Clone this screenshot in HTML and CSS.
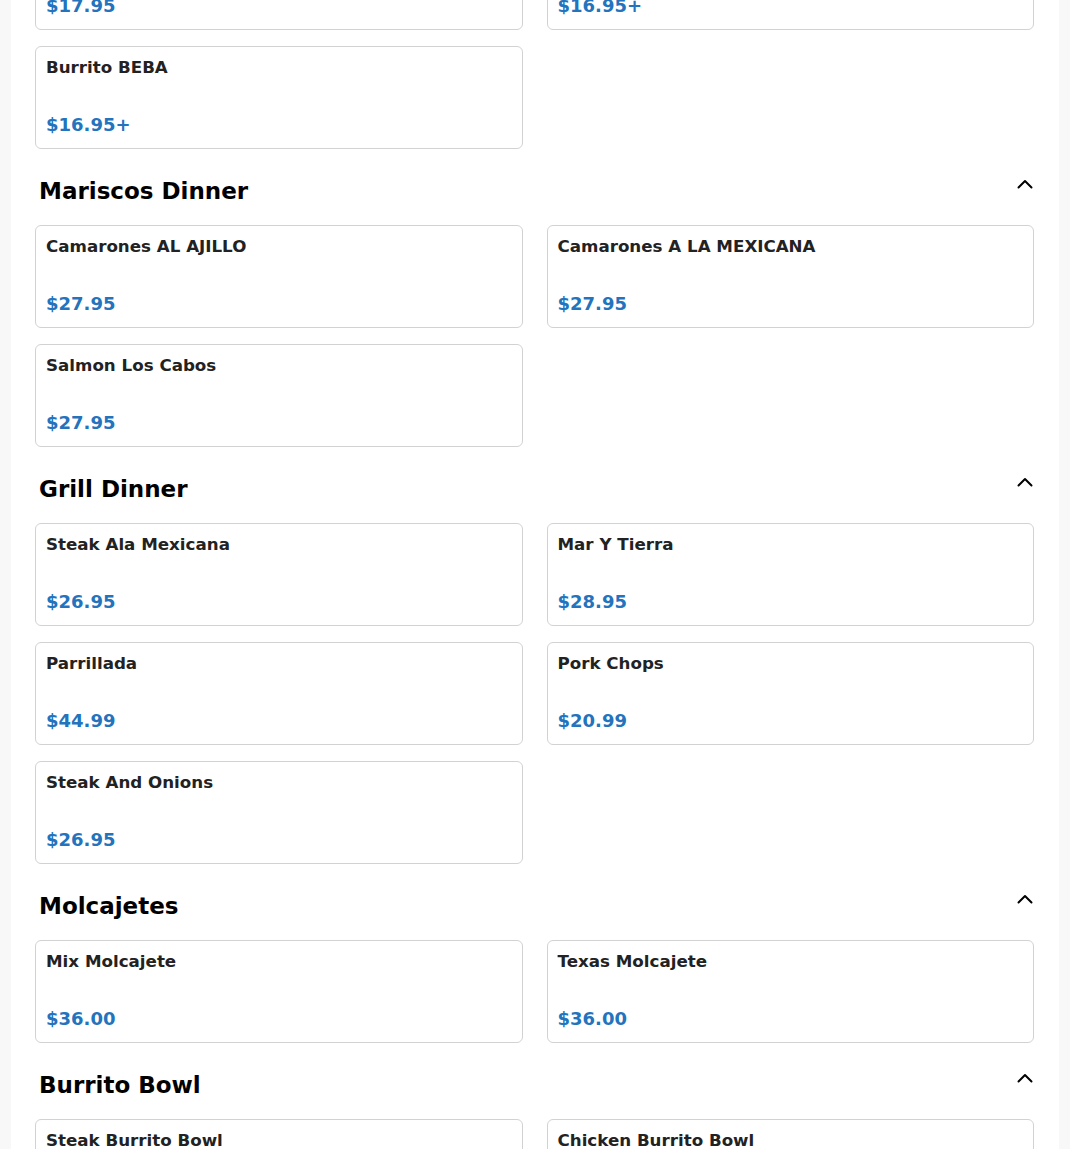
FILE: index.html
```html
<!DOCTYPE html>
<html lang="en">
<head>
<meta charset="utf-8">
<title>Menu</title>
<link rel="stylesheet" href="styles.css">
</head>
<body>
<main class="menu">
  <div class="grid grid-first">
    <div class="card"><div class="card-title">Burrito Supremo</div><div class="card-price">$17.95</div></div>
    <div class="card"><div class="card-title">Burrito California</div><div class="card-price">$16.95+</div></div>
    <div class="card"><div class="card-title">Burrito BEBA</div><div class="card-price">$16.95+</div></div>
  </div>

  <section class="section">
    <div class="section-head">
      <h2 class="section-title">Mariscos Dinner</h2>
      <span class="chevron"><svg width="16" height="10" viewBox="0 0 16 10"><polyline points="1.5,8.5 8,2 14.5,8.5" fill="none" stroke="#000" stroke-width="2" stroke-linecap="round" stroke-linejoin="round"/></svg></span>
    </div>
    <div class="grid">
      <div class="card"><div class="card-title">Camarones AL AJILLO</div><div class="card-price">$27.95</div></div>
      <div class="card"><div class="card-title">Camarones A LA MEXICANA</div><div class="card-price">$27.95</div></div>
      <div class="card"><div class="card-title">Salmon Los Cabos</div><div class="card-price">$27.95</div></div>
    </div>
  </section>

  <section class="section">
    <div class="section-head">
      <h2 class="section-title">Grill Dinner</h2>
      <span class="chevron"><svg width="16" height="10" viewBox="0 0 16 10"><polyline points="1.5,8.5 8,2 14.5,8.5" fill="none" stroke="#000" stroke-width="2" stroke-linecap="round" stroke-linejoin="round"/></svg></span>
    </div>
    <div class="grid">
      <div class="card"><div class="card-title">Steak Ala Mexicana</div><div class="card-price">$26.95</div></div>
      <div class="card"><div class="card-title">Mar Y Tierra</div><div class="card-price">$28.95</div></div>
      <div class="card"><div class="card-title">Parrillada</div><div class="card-price">$44.99</div></div>
      <div class="card"><div class="card-title">Pork Chops</div><div class="card-price">$20.99</div></div>
      <div class="card"><div class="card-title">Steak And Onions</div><div class="card-price">$26.95</div></div>
    </div>
  </section>

  <section class="section">
    <div class="section-head">
      <h2 class="section-title">Molcajetes</h2>
      <span class="chevron"><svg width="16" height="10" viewBox="0 0 16 10"><polyline points="1.5,8.5 8,2 14.5,8.5" fill="none" stroke="#000" stroke-width="2" stroke-linecap="round" stroke-linejoin="round"/></svg></span>
    </div>
    <div class="grid">
      <div class="card"><div class="card-title">Mix Molcajete</div><div class="card-price">$36.00</div></div>
      <div class="card"><div class="card-title">Texas Molcajete</div><div class="card-price">$36.00</div></div>
    </div>
  </section>

  <section class="section">
    <div class="section-head">
      <h2 class="section-title">Burrito Bowl</h2>
      <span class="chevron"><svg width="16" height="10" viewBox="0 0 16 10"><polyline points="1.5,8.5 8,2 14.5,8.5" fill="none" stroke="#000" stroke-width="2" stroke-linecap="round" stroke-linejoin="round"/></svg></span>
    </div>
    <div class="grid">
      <div class="card"><div class="card-title">Steak Burrito Bowl</div><div class="card-price">$17.95</div></div>
      <div class="card"><div class="card-title">Chicken Burrito Bowl</div><div class="card-price">$16.95</div></div>
    </div>
  </section>
</main>
</body>
</html>
```

FILE: styles.css
```css
* {
  box-sizing: border-box;
}

html, body {
  margin: 0;
  padding: 0;
}

body {
  background: #f8f8f8;
  font-family: "DejaVu Sans", "Liberation Sans", sans-serif;
  overflow: hidden;
}

.menu {
  background: #ffffff;
  margin: 0 11px;
  padding: 0 25px 40px 24px;
  min-height: 1200px;
}

.grid {
  display: grid;
  grid-template-columns: 1fr 1fr;
  column-gap: 24px;
  row-gap: 16px;
  margin-top: 21px;
}

.grid-first {
  margin-top: -73px;
}

.section-head {
  display: flex;
  justify-content: space-between;
  align-items: flex-start;
  margin-top: 23px;
  height: 32px;
}

.section-title {
  margin: 6px 0 0;
  padding-left: 4px;
  font-size: 23px;
  line-height: 26px;
  font-weight: bold;
  color: #000;
}

.chevron {
  display: block;
  width: 16px;
  height: 10px;
  margin-top: 7px;
  margin-right: 1px;
}

.chevron svg {
  display: block;
}

.card {
  height: 103px;
  border: 1px solid #d2d2d2;
  border-radius: 6px;
  padding: 9px 10px 11px;
  display: flex;
  flex-direction: column;
  justify-content: space-between;
  background: #fff;
}

.card-title {
  font-size: 16.7px;
  line-height: 22px;
  font-weight: bold;
  color: #222;
}

.card-price {
  font-size: 18px;
  line-height: 24px;
  font-weight: bold;
  color: #2373bd;
}
```
